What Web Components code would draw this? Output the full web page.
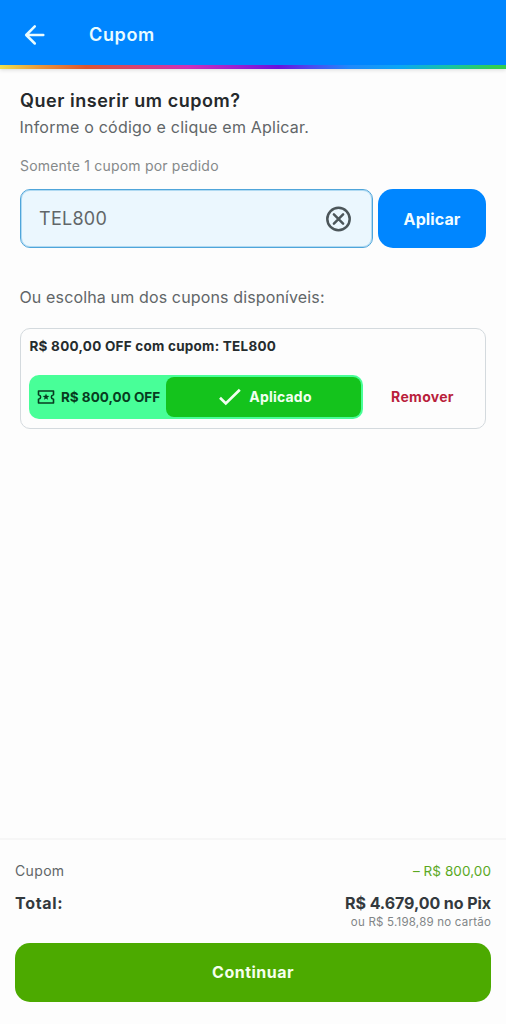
<!DOCTYPE html>
<html lang="pt-BR">
<head>
<meta charset="utf-8">
<title>Cupom</title>
<style>
html, body { margin: 0; height: 100%; background: #fdfdfd; }
body { font-family: Inter, "Noto Sans", sans-serif; color: #616668; }
</style>
</head>
<body>
<coupon-page></coupon-page>
<script>
const define = (name, html) => {
  const tpl = document.createElement('template');
  tpl.innerHTML = html;
  customElements.define(name, class extends HTMLElement {
    constructor() {
      super();
      this.attachShadow({ mode: 'open' }).append(tpl.content.cloneNode(true));
    }
  });
};

define('app-header', `
<style>
:host { display: block; box-shadow: 0 1px 4px rgba(0,0,0,.14); }
.bar { height: 65px; background: #0086ff; display: flex; align-items: center; padding-left: 24px; gap: 43px; color: #e9fcff; }
h1 { margin: 5px 0 0; font-size: 18px; font-weight: 600; line-height: 20px; letter-spacing: .65px; }
svg { display: block; margin-top: 4px; }
.stripe { height: 4px; background: linear-gradient(90deg, #eee04e 0%, #e9963a 8%, #dc5530 17%, #d8407a 28%, #cf30b8 37%, #9a1fd0 47%, #6a12dc 55%, #4f46ee 61%, #2088fb 69%, #0aa6f4 79%, #18c3a2 89%, #32ce50 98%); }
</style>
<div class="bar">
<svg width="22" height="22" viewBox="0 0 22 22" fill="none" stroke="currentColor" stroke-width="2.5" stroke-linecap="round" stroke-linejoin="round"><path d="M19.300 11H2.600M10.800 2.400L2.200 11l8.600 8.500"/></svg>
<h1><slot></slot></h1></div>
<div class="stripe"></div>`);

define('coupon-intro', `
<style>
:host { display: block; }
h2, p { margin: 0; white-space: nowrap; }
h2 { font-size: 18px; font-weight: 600; line-height: 26px; letter-spacing: .54px; color: #25292b; }
.hint { font-size: 16px; line-height: 26px; letter-spacing: .22px; margin-left: -.5px; }
.note { font-size: 14px; line-height: 20px; letter-spacing: .2px; color: #85898a; margin: 16px 0 0; }
</style>
<h2><slot></slot></h2><p class="hint"><slot name="hint"></slot></p><p class="note"><slot name="note"></slot></p>`);

define('coupon-field', `
<style>
:host { display: flex; gap: 5px; height: 59px; }
.field { flex: 1; box-sizing: border-box; border: 1px solid #4fa5da; box-shadow: inset 0 0 0 1px #b0daf2; border-radius: 10px; background: #ebf7fe; display: flex; align-items: center; justify-content: space-between; padding: 0 20px 0 18px; font-size: 18px; letter-spacing: .27px; }
svg { display: block; color: #4c565a; }
button { width: 108px; border: 0; padding: 0; border-radius: 15px; background: #0086ff; color: #f1fcff; font: 700 16px Inter, sans-serif; letter-spacing: .1px; }
</style>
<div class="field"><span><slot></slot></span>
<svg width="26" height="26" viewBox="0 0 26 26" fill="none" stroke="currentColor" stroke-width="2.500" stroke-linecap="round"><circle cx="12.500" cy="13" r="11.200"/><path d="M7.900 8.400l9.200 9.200M17.100 8.400l-9.200 9.200"/></svg></div>
<button><slot name="action"></slot></button>`);

define('coupon-card', `
<style>
:host { display: block; box-sizing: border-box; height: 101px; border: 1px solid #d4dade; border-radius: 10px; padding: 7px 8px 0; font-size: 13.5px; font-weight: 700; color: #252c2e; white-space: nowrap; }
.title { line-height: 20px; letter-spacing: .24px; padding-left: .5px; }
.row { display: flex; align-items: center; margin-top: 19px; }
.pill { width: 334px; height: 44px; box-sizing: border-box; border-radius: 10px; background: #48ff98; display: flex; align-items: center; padding: 2px; color: #073c20; }
.value { width: 135px; display: flex; align-items: center; gap: 6px; box-sizing: border-box; padding-left: 6px; letter-spacing: -.01px; }
.applied { flex: 1; height: 40px; border-radius: 8px; background: #14c31c; color: #f1fff0; display: flex; align-items: center; justify-content: center; gap: 7px; font-size: 14px; padding-left: 3px; letter-spacing: .2px; }
.applied span, .remove { padding-bottom: 2px; }
.remove { flex: 1; text-align: center; color: #b91f3c; font-size: 14px; letter-spacing: .3px; padding-left: 5px; }
svg { display: block; flex: none; }
</style>
<div class="title"><slot></slot></div>
<div class="row"><div class="pill">
<div class="value"><svg width="18" height="16" viewBox="0 0 18 16" fill="none" stroke="currentColor" stroke-width="1.600" stroke-linejoin="round"><path d="M1.500 2h15v3.700c-2.900.8-2.900 3.800 0 4.600V14h-15v-3.700c2.900-.8 2.900-3.800 0-4.600z"/><path fill="currentColor" stroke="none" d="M9 4.500l.9 2.300 2.500.1-2 1.500.7 2.400L9 9.500l-2.100 1.300.7-2.400-2-1.500 2.500-.1z"/></svg><span><slot name="value"></slot></span></div>
<div class="applied"><svg width="24" height="20" viewBox="0 0 24 20" fill="none" stroke="currentColor" stroke-width="2.700"><path d="M2 10.700l5.800 5.700L21.800 2.700"/></svg><span><slot name="state"></slot></span></div>
</div><div class="remove"><slot name="remove"></slot></div></div>`);

define('order-summary', `
<style>
:host { display: block; box-sizing: border-box; height: 186px; border-top: 2px solid #f6f6f6; padding: 20px 15px 0; white-space: nowrap; }
.line { display: flex; justify-content: space-between; }
.coupon { font-size: 14px; line-height: 22px; letter-spacing: .35px; }
.coupon .discount { color: #5aa91f; font-size: 13.500px; letter-spacing: .07px; }
.total { font-size: 16px; line-height: 22px; font-weight: 700; color: #33393d; margin-top: 10px; letter-spacing: -.07px; }
.total .label { letter-spacing: .7px; }
.card { text-align: right; font-size: 11.5px; line-height: 16px; color: #818587; letter-spacing: .22px; }
button { display: block; width: 100%; height: 59px; margin-top: 13px; padding: 0 0 2px; border: 0; border-radius: 15px; background: #4caa00; color: #f5ffed; font: 700 16px Inter, sans-serif; letter-spacing: .47px; }
</style>
<div class="line coupon"><span><slot name="coupon"></slot></span><span class="discount"><slot name="discount"></slot></span></div>
<div class="line total"><span class="label"><slot name="label"></slot></span><span><slot name="total"></slot></span></div>
<div class="card"><slot name="card"></slot></div>
<button><slot name="action"></slot></button>`);

define('coupon-page', `
<style>
:host { display: flex; flex-direction: column; height: 1024px; width: 506px; }
main { flex: 1; padding: 19px 20px 0; }
coupon-field { margin-top: 13px; }
.choose { margin: 36px 0 0 -.5px; font-size: 16px; line-height: 26px; letter-spacing: .14px; white-space: nowrap; }
coupon-card { margin-top: 18px; }
</style>
<app-header>Cupom</app-header>
<main>
<coupon-intro>Quer inserir um cupom?<span slot="hint">Informe o código e clique em Aplicar.</span><span slot="note">Somente 1 cupom por pedido</span></coupon-intro>
<coupon-field>TEL800<span slot="action">Aplicar</span></coupon-field>
<p class="choose">Ou escolha um dos cupons disponíveis:</p>
<coupon-card>R$ 800,00 OFF com cupom: TEL800<span slot="value">R$ 800,00 OFF</span><span slot="state">Aplicado</span><span slot="remove">Remover</span></coupon-card>
</main>
<order-summary><span slot="coupon">Cupom</span><span slot="discount">– R$ 800,00</span><span slot="label">Total:</span><span slot="total">R$ 4.679,00 no Pix</span><span slot="card">ou R$ 5.198,89 no cartão</span><span slot="action">Continuar</span></order-summary>`);
</script>
</body>
</html>
